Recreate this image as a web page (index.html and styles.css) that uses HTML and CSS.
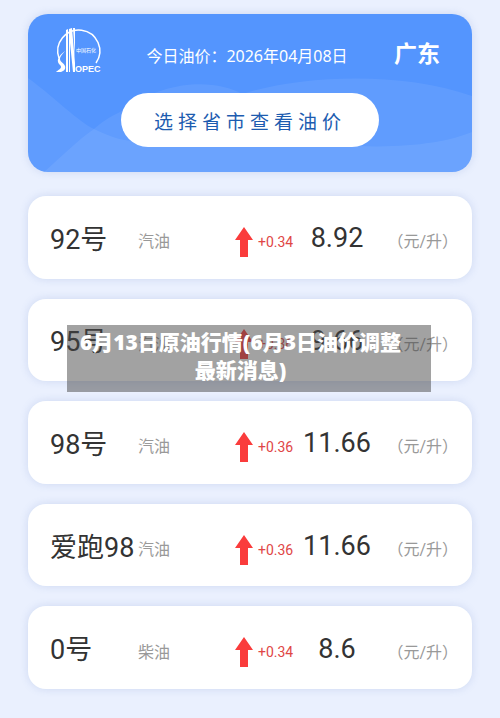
FILE: index.html
```html
<!DOCTYPE html>
<html lang="zh-CN">
<head>
    <meta charset="UTF-8">
    <meta name="viewport" content="width=device-width, initial-scale=1">
    <title>今日油价</title>
    <link rel="stylesheet" href="styles.css">
</head>
<body>
<div class="page">
    <div class="banner">
        <svg class="wave" viewBox="0 0 444 158" preserveAspectRatio="none" aria-hidden="true">
            <path d="M0 64C30 86 48 106 66 115C96 130 110 128 140 126C200 124 280 130 330 132C380 134 420 128 444 118V158H0Z"/>
            <path d="M16 158C36 140 50 126 66 115C78 104 88 100 98 95C140 64 190 66 214 80C270 62 370 56 444 82V158Z"/>
        </svg>
        <div class="top">
            <svg class="logo" viewBox="0 0 44 46" role="img" aria-label="SINOPEC">
                <path class="ring" d="M3 31A21 21 0 1 1 40 36"/>
                <path class="road" d="M9 24C5 27 1 31 2 35C3 38 5 38 5 40C5 42 2 43 0 45H5C8 44 10 42 9 39C8 36 4 35 4 32C4 29 7 27 9 24Z"/>
                <path class="road" d="M10 3L12 2V45H10ZM13 2L16 1L19 36V45H17L14 16V45H13ZM17 1H19V30Z"/>
                <text class="cn" x="20" y="25">中国石化</text>
                <text class="en" x="19" y="45">OPEC</text>
            </svg>
            <span class="date">今日油价：2026年04月08日</span>
            <strong class="city">广东</strong>
        </div>
        <button class="choose" type="button">选择省市查看油价</button>
    </div>
    <ul class="list">
        <li>
            <span class="name">92号</span>
            <span class="type">汽油</span>
            <span class="change"><svg viewBox="0 0 18 30"><path d="M9 0L18 13H13V30H5V13H0Z"/></svg>+0.34</span>
            <span class="price">8.92</span>
            <span class="unit">（元/升）</span>
        </li>
        <li>
            <span class="name">95号</span>
            <span class="type">汽油</span>
            <span class="change"><svg viewBox="0 0 18 30"><path d="M9 0L18 13H13V30H5V13H0Z"/></svg>+0.36</span>
            <span class="price">9.66</span>
            <span class="unit">（元/升）</span>
        </li>
        <li>
            <span class="name">98号</span>
            <span class="type">汽油</span>
            <span class="change"><svg viewBox="0 0 18 30"><path d="M9 0L18 13H13V30H5V13H0Z"/></svg>+0.36</span>
            <span class="price">11.66</span>
            <span class="unit">（元/升）</span>
        </li>
        <li>
            <span class="name">爱跑98</span>
            <span class="type">汽油</span>
            <span class="change"><svg viewBox="0 0 18 30"><path d="M9 0L18 13H13V30H5V13H0Z"/></svg>+0.36</span>
            <span class="price">11.66</span>
            <span class="unit">（元/升）</span>
        </li>
        <li>
            <span class="name">0号</span>
            <span class="type">柴油</span>
            <span class="change"><svg viewBox="0 0 18 30"><path d="M9 0L18 13H13V30H5V13H0Z"/></svg>+0.34</span>
            <span class="price">8.6</span>
            <span class="unit">（元/升）</span>
        </li>
    </ul>
    <h1 class="caption">6月13日原油行情(6月3日油价调整最新消息)</h1>
</div>
</body>
</html>
```
FILE: styles.css
```css
* {
    margin: 0;
    padding: 0;
    box-sizing: border-box;
}

body {
    background: #eaf0fe;
    color: #333;
    font-family: Roboto, "Noto Sans CJK SC", sans-serif;
}

.page {
    position: relative;
    display: flex;
    flex-direction: column;
    gap: 24px;
    min-height: 100vh;
    padding: 14px 28px 29px;
}

/* header card */
.banner {
    position: relative;
    overflow: hidden;
    padding: 13px 0 25px;
    border-radius: 20px;
    background: #5495fe;
    box-shadow: 0 0 8px rgba(90, 120, 190, 0.2);
    color: #fff;
}

.wave {
    position: absolute;
    left: 0;
    top: 0;
    width: 100%;
    height: 100%;
    fill: rgba(255, 255, 255, 0.07);
}

.top {
    position: relative;
    display: flex;
    align-items: center;
    justify-content: space-between;
    height: 56px;
    padding: 0 32px 0 28px;
}

.logo {
    align-self: flex-start;
    width: 44px;
    height: 46px;
    overflow: visible;
    fill: #fff;
}

.logo .ring {
    fill: none;
    stroke: #fff;
    stroke-width: 1.5;
}

.logo .cn {
    font-size: 5px;
}

.logo .en {
    font-family: "Liberation Sans Narrow", "Liberation Sans", sans-serif;
    font-size: 9px;
    font-weight: bold;
}

.date {
    font-family: "Noto Sans", "Noto Sans CJK SC", sans-serif;
    font-size: 16px;
}

.city {
    font-size: 23px;
    line-height: 28px;
}

.choose {
    position: relative;
    display: block;
    width: 58%;
    height: 54px;
    margin: 10px auto 0;
    border: 0;
    border-radius: 27px;
    background: #fff;
    color: #1d5cb0;
    font-family: inherit;
    font-size: 19px;
    letter-spacing: 5px;
}

/* price rows */
.list {
    flex: 1;
    display: flex;
    flex-direction: column;
    gap: 20px;
    list-style: none;
}

.list li {
    flex: 1;
    display: grid;
    grid-template-columns: 88px 1fr 63px 78px 82px;
    align-items: center;
    min-height: 80px;
    padding: 0 14px 0 22px;
    border-radius: 18px;
    background: #fff;
    box-shadow: 0 0 8px rgba(90, 120, 190, 0.2);
    white-space: nowrap;
}

.name {
    font-size: 27px;
}

.type,
.unit {
    padding-top: 6px;
    color: #999;
    font-size: 16px;
}

.unit {
    text-align: right;
}

.change {
    display: flex;
    align-items: center;
    gap: 5px;
    padding-top: 9px;
    color: #e04646;
    font-size: 14px;
}

.change svg {
    flex: none;
    width: 18px;
    height: 30px;
    fill: #fa3c3c;
}

.price {
    padding-top: 2px;
    font-size: 27px;
    text-align: center;
}

/* title laid over the rows */
.caption {
    position: absolute;
    top: 325px;
    left: 67px;
    right: 69px;
    padding: 3px 22px 8px 5px;
    background: rgba(70, 70, 70, 0.5);
    color: #fff;
    font-family: "Noto Sans", "Noto Sans CJK SC", sans-serif;
    font-size: 21px;
    font-weight: 900;
    line-height: 28px;
    text-align: center;
}
```
